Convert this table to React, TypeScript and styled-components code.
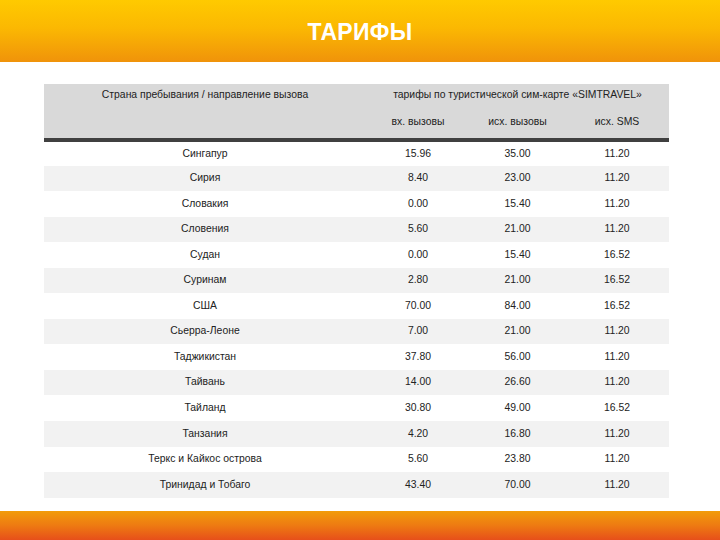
import styled, { createGlobalStyle } from 'styled-components';

const GlobalStyle = createGlobalStyle`
  html, body {
    margin: 0;
    padding: 0;
    background: #ffffff;
  }
  body {
    font-family: "Liberation Sans", Arial, sans-serif;
  }
`;

interface Rate {
  readonly country: string;
  readonly incoming: string;
  readonly outgoing: string;
  readonly sms: string;
}

const RATES: readonly Rate[] = [
  { country: 'Сингапур', incoming: '15.96', outgoing: '35.00', sms: '11.20' },
  { country: 'Сирия', incoming: '8.40', outgoing: '23.00', sms: '11.20' },
  { country: 'Словакия', incoming: '0.00', outgoing: '15.40', sms: '11.20' },
  { country: 'Словения', incoming: '5.60', outgoing: '21.00', sms: '11.20' },
  { country: 'Судан', incoming: '0.00', outgoing: '15.40', sms: '16.52' },
  { country: 'Суринам', incoming: '2.80', outgoing: '21.00', sms: '16.52' },
  { country: 'США', incoming: '70.00', outgoing: '84.00', sms: '16.52' },
  { country: 'Сьерра-Леоне', incoming: '7.00', outgoing: '21.00', sms: '11.20' },
  { country: 'Таджикистан', incoming: '37.80', outgoing: '56.00', sms: '11.20' },
  { country: 'Тайвань', incoming: '14.00', outgoing: '26.60', sms: '11.20' },
  { country: 'Тайланд', incoming: '30.80', outgoing: '49.00', sms: '16.52' },
  { country: 'Танзания', incoming: '4.20', outgoing: '16.80', sms: '11.20' },
  { country: 'Теркс и Кайкос острова', incoming: '5.60', outgoing: '23.80', sms: '11.20' },
  { country: 'Тринидад и Тобаго', incoming: '43.40', outgoing: '70.00', sms: '11.20' },
];

const Page = styled.div`
  width: 720px;
  height: 540px;
  display: flex;
  flex-direction: column;
  overflow: hidden;
`;

const TopBand = styled.header`
  height: 62px;
  flex-shrink: 0;
  display: flex;
  align-items: center;
  justify-content: center;
  background: linear-gradient(180deg, #ffca00 0%, #fbb802 45%, #f0930a 100%);
`;

const Title = styled.h1`
  margin: 0;
  padding-top: 2px;
  font-family: "Liberation Sans", Arial, sans-serif;
  font-size: 23px;
  font-weight: 700;
  color: #ffffff;
  letter-spacing: 0.3px;
`;

const Content = styled.main`
  padding: 22px 51px 0 44px;
`;

const Table = styled.table`
  width: 625px;
  border-collapse: collapse;
  table-layout: fixed;
  font-family: "Liberation Sans", Arial, sans-serif;
  font-size: 10.4px;
  color: #222222;
`;

const HeadCell = styled.th<{ $height?: number; $valign?: 'top' | 'middle' }>`
  background: #d9d9d9;
  font-weight: 400;
  text-align: center;
  vertical-align: ${({ $valign }) => $valign ?? 'middle'};
  height: ${({ $height }) => ($height ? `${$height}px` : 'auto')};
  padding: 0;
  line-height: 1;
`;

const CountryHead = styled(HeadCell)`
  padding-top: 6px;
`;

const SubHeadRow = styled.tr`
  border-bottom: 4px solid #404040;
`;

const BodyRow = styled.tr<{ $shaded: boolean }>`
  height: 25.55px;
  background: ${({ $shaded }) => ($shaded ? '#f2f2f2' : '#ffffff')};
`;

const Cell = styled.td`
  text-align: center;
  vertical-align: middle;
  padding: 0;
  line-height: 1;
`;

const BottomBand = styled.footer`
  margin-top: auto;
  height: 29px;
  flex-shrink: 0;
  background: linear-gradient(180deg, #f29c0a 0%, #ee7a12 50%, #e74f1a 100%);
`;

export default function App() {
  return (
    <Page>
      <GlobalStyle />
      <TopBand>
        <Title>ТАРИФЫ</Title>
      </TopBand>

      <Content>
        <Table>
          <colgroup>
            <col style={{ width: 322 }} />
            <col style={{ width: 104 }} />
            <col style={{ width: 95 }} />
            <col style={{ width: 104 }} />
          </colgroup>
          <thead>
            <tr>
              <CountryHead rowSpan={2} $valign="top">
                Страна пребывания / направление вызова
              </CountryHead>
              <HeadCell colSpan={3} $height={22}>
                тарифы по туристической сим-карте «SIMTRAVEL»
              </HeadCell>
            </tr>
            <SubHeadRow>
              <HeadCell $height={32}>вх. вызовы</HeadCell>
              <HeadCell $height={32}>исх. вызовы</HeadCell>
              <HeadCell $height={32}>исх. SMS</HeadCell>
            </SubHeadRow>
          </thead>
          <tbody>
            {RATES.map((r, i) => (
              <BodyRow key={r.country} $shaded={i % 2 === 1}>
                <Cell>{r.country}</Cell>
                <Cell>{r.incoming}</Cell>
                <Cell>{r.outgoing}</Cell>
                <Cell>{r.sms}</Cell>
              </BodyRow>
            ))}
          </tbody>
        </Table>
      </Content>

      <BottomBand />
    </Page>
  );
}
